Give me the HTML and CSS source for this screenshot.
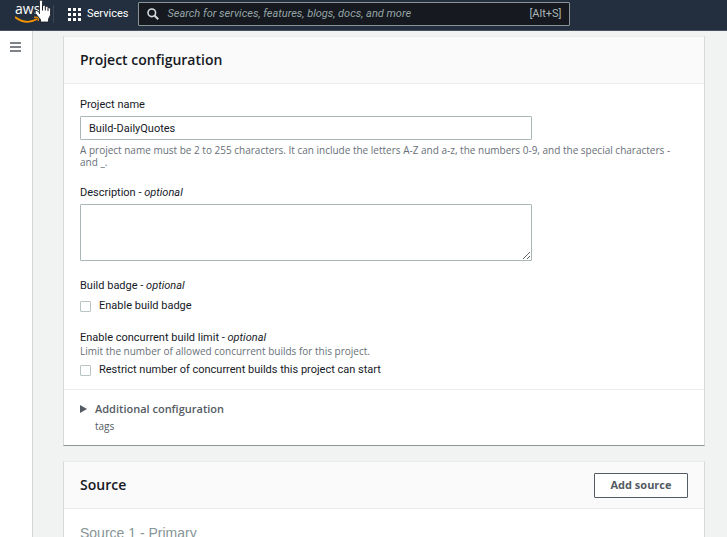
FILE: index.html
```html
<!DOCTYPE html>
<html lang="en">
<head>
<meta charset="utf-8">
<title>Create build project</title>
<link rel="stylesheet" href="styles.css">
</head>
<body>
<header class="topbar">
  <a class="logo" href="#" aria-label="AWS home">
    <span class="logo-text">aws</span>
    <svg class="smile" width="26" height="8" viewBox="0 0 26 8"><path d="M0 1Q11 9.500 22 3" fill="none" stroke="#f79400" stroke-width="1.800"/><path d="M19 1.300Q24.500 0 23 5" fill="none" stroke="#f79400" stroke-width="1.200"/></svg>
  </a>
  <span class="rule"></span>
  <button class="services" type="button">
    <svg width="14" height="13" viewBox="0 0 14 13" fill="#fff"><path d="M0 0h3v3H0zM5 0h3v3H5zM10 0h3v3h-3zM0 5h3v3H0zM5 5h3v3H5zM10 5h3v3h-3zM0 10h3v3H0zM5 10h3v3H5zM10 10h3v3h-3z"/></svg>
    <span>Services</span>
  </button>
  <label class="search">
    <svg width="12" height="12" viewBox="0 0 12 12" fill="none" stroke="#d5dbdb"><circle cx="4.800" cy="4.800" r="3.800" stroke-width="1.600"/><path d="M7.500 7.500l3.700 3.700" stroke-width="2"/></svg>
    <input type="search" aria-label="Search" placeholder="Search for services, features, blogs, docs, and more">
    <span class="shortcut">[Alt+S]</span>
  </label>
  <svg class="pointer" width="18" height="23" viewBox="0 0 18 23"><path d="M5.500 14V1.500Q5.500 0 7 0Q8.500 0 8.500 1.500V6Q10.500 4.500 11.300 6.500Q13.300 5.500 14 7.500Q16.500 7 16.500 9.500V15L14.500 19V22H6.500V19.500L1.500 13.500Q0 11 2.500 10.500Q4 10.500 5.500 13" fill="#fff" stroke="#16191f" stroke-width=".8"/><path d="M8.500 6v4.500M11.300 6.500v4M14 7.500v3.500" stroke="#16191f" stroke-width="1"/></svg>
</header>
<div class="shell">
  <nav class="rail">
    <button type="button" aria-label="Open navigation"><svg width="11" height="10" viewBox="0 0 11 10"><path d="M0 1h11M0 5h11M0 9h11" stroke="#545b64" stroke-width="1.500"/></svg></button>
  </nav>
  <main class="content">
    <section class="card">
      <div class="card-head"><h2>Project configuration</h2></div>
      <form class="card-body">
        <div class="field">
          <label for="name">Project name</label>
          <input class="box" id="name" type="text" value="Build-DailyQuotes">
          <p class="hint">A project name must be 2 to 255 characters. It can include the letters A-Z and a-z, the numbers 0-9, and the special characters - and _.</p>
        </div>
        <div class="field">
          <label for="desc">Description - <i>optional</i></label>
          <textarea class="box" id="desc"></textarea>
        </div>
        <fieldset class="field">
          <legend>Build badge - <i>optional</i></legend>
          <label class="check"><input type="checkbox">Enable build badge</label>
        </fieldset>
        <fieldset class="field">
          <legend>Enable concurrent build limit - <i>optional</i></legend>
          <p class="note">Limit the number of allowed concurrent builds for this project.</p>
          <label class="check"><input type="checkbox">Restrict number of concurrent builds this project can start</label>
        </fieldset>
      </form>
      <button class="expander" type="button">
        <svg width="7" height="8" viewBox="0 0 7 8"><path d="M0 0l7 4-7 4z" fill="#545b64"/></svg>
        <span class="expander-text"><b>Additional configuration</b><span class="tags">tags</span></span>
      </button>
    </section>
    <section class="card">
      <div class="card-head"><h2>Source</h2><button class="add" type="button">Add source</button></div>
      <div class="card-body source"><h3>Source 1 - Primary</h3></div>
    </section>
  </main>
</div>
</body>
</html>
```
FILE: styles.css
```css
* { box-sizing: border-box; }
body {
  margin: 0;
  height: 100vh;
  overflow: hidden;
  display: flex;
  flex-direction: column;
  background: #f1f3f3;
  color: #16191f;
  font: 11px/14px Roboto, sans-serif;
}
button, input, textarea { font: inherit; color: inherit; }
button { padding: 0; border: 0; background: none; }
h2, h3, p { margin: 0; }

.topbar {
  position: relative;
  flex: none;
  display: flex;
  align-items: flex-start;
  height: 31px;
  background: #232f3e;
  border-bottom: 1px solid #485260;
  color: #fff;
}
.logo {
  display: flex;
  flex-direction: column;
  width: 38px;
  margin-left: 15px;
  padding-top: 2px;
  color: #fff;
  text-decoration: none;
}
.logo-text { font: 14px/14px "Open Sans", sans-serif; }
.rule { width: 1px; height: 18px; margin-top: 5px; background: #3b4654; }
.services { display: flex; gap: 5px; margin-left: 14px; padding-top: 8px; }
.services span { line-height: 12px; }
.search {
  display: flex;
  align-items: center;
  width: 432px;
  height: 24px;
  margin: 2px 0 0 10px;
  padding: 0 8px;
  background: #16191f;
  border: 1px solid #879596;
  border-radius: 1px;
  color: #aab7b8;
}
.search input {
  flex: 1;
  min-width: 0;
  margin-left: 8px;
  padding: 0;
  border: 0;
  outline: 0;
  background: none;
}
.search input::placeholder { color: #95a5a6; font-style: italic; }
.pointer { position: absolute; left: 34px; top: 0; }

.shell { flex: 1; display: flex; min-height: 0; }
.rail {
  flex: none;
  width: 33px;
  padding: 11px 0 0 10px;
  background: #fff;
  border-right: 1px solid #d0d5d5;
}
.rail svg { display: block; }
.content { flex: 1; padding: 5px 22px 0 30px; }
.card {
  margin-bottom: 15px;
  background: #fff;
  border: 1px solid #d5dbdb;
  border-top-color: #eaeded;
  border-bottom-color: #919797;
}
.card-head {
  display: flex;
  align-items: center;
  justify-content: space-between;
  height: 47px;
  padding: 0 16px;
  background: #fafafa;
  border-bottom: 1px solid #eaeded;
}
h2 { font: 600 14px/18px "Open Sans", sans-serif; }
.card-body { padding: 14px 16px 12px; }
.field { margin: 0 0 18px; padding: 0; border: 0; }
.field:last-child { margin: 0; }
.field > label, legend { display: block; padding: 0; }
.box {
  display: block;
  width: 452px;
  max-width: 100%;
  height: 24px;
  margin-top: 4px;
  padding: 0 8px;
  border: 1px solid #aab7b8;
  border-radius: 1px;
  background: #fff;
  outline: 0;
}
textarea.box { height: 57px; }
.hint, .note { color: #687078; font: 10px/12px "Open Sans", sans-serif; }
.hint { margin-top: 4px; }
.field > .check { display: flex; align-items: center; gap: 8px; margin-top: 6px; }
.check input {
  appearance: none;
  width: 11px;
  height: 11px;
  margin: 0;
  border: 1px solid #b9c4c4;
  border-radius: 1px;
  background: #fff;
}
.expander {
  display: flex;
  width: 100%;
  gap: 8px;
  padding: 12px 16px;
  border-top: 1px solid #eaeded;
  color: #545b64;
  font: 11px/14px "Open Sans", sans-serif;
  text-align: left;
}
.expander svg { margin-top: 3px; }
.expander b { font-weight: 600; }
.expander-text { display: flex; flex-direction: column; gap: 3px; }
.tags { font-size: 10px; }
.add {
  width: 94px;
  height: 25px;
  border: 1px solid #545b64;
  border-radius: 1px;
  background: #fff;
  color: #545b64;
  font: 700 11px/14px "Open Sans", sans-serif;
}
.source { padding-top: 15px; }
.source h3 { color: #879596; font: 14px/18px "Liberation Sans", sans-serif; }
```
